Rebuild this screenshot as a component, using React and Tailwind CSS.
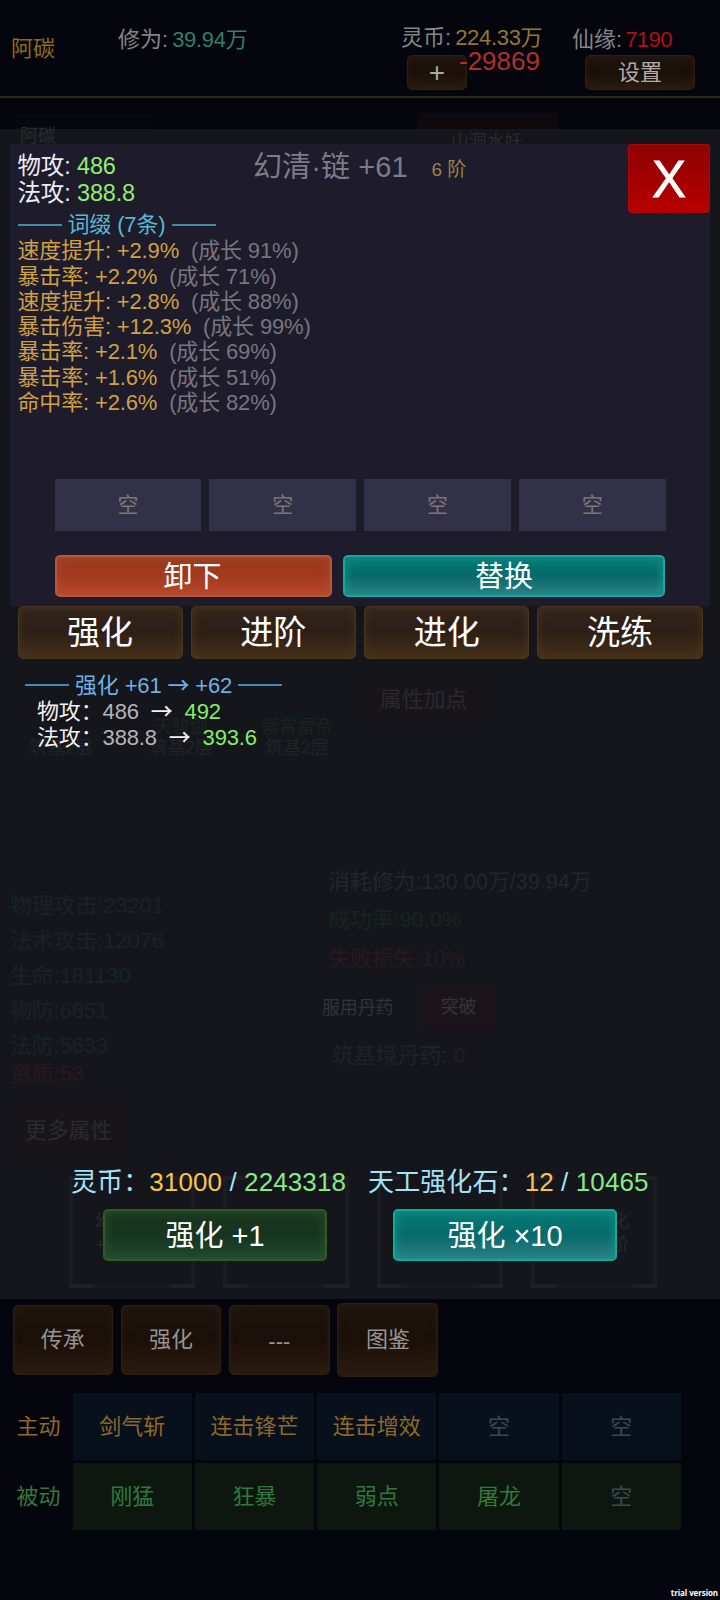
import clsx from "clsx";

const TONES = {
  brown:
    "bg-linear-to-b from-[#31241c] via-[#2d1f15] to-[#46301a] border border-[#493620] shadow-[inset_0_0_8px_1px_#4b341ccc]",
  brownDim:
    "bg-linear-to-b from-[#1f150f] via-[#1a0f09] to-[#2c1c0f] border border-[#2d1f12] shadow-[inset_0_0_6px_1px_#2d1d1099]",
  red: "bg-linear-to-b from-[#97391f] via-[#a13a1e] to-[#b5472c] border-2 border-[#b5573f] shadow-[inset_0_0_8px_1px_#bb4f35b0]",
  teal: "bg-linear-to-b from-[#067a74] via-[#056a6a] to-[#2b7d85] border-2 border-[#17a79d] shadow-[inset_0_0_9px_2px_#14958cb0]",
  green:
    "bg-linear-to-b from-[#1c3520] via-[#17351f] to-[#20492f] border-2 border-[#2f5a22] shadow-[inset_0_0_9px_2px_#28552ab0]",
};

function GameButton({ tone, className, children }) {
  return (
    <button
      className={clsx(
        "flex items-center justify-center rounded-[5px] whitespace-pre leading-none",
        TONES[tone],
        className
      )}
    >
      {children}
    </button>
  );
}

const Arrow = () => <span className="font-['Noto_Sans_CJK_SC'] leading-none font-medium">→</span>;

const affixes = [
  ["速度提升", "2.9", 91],
  ["暴击率", "2.2", 71],
  ["速度提升", "2.8", 88],
  ["暴击伤害", "12.3", 99],
  ["暴击率", "2.1", 69],
  ["暴击率", "1.6", 51],
  ["命中率", "2.6", 82],
];

const active = ["剑气斩", "连击锋芒", "连击增效", "空", "空"];
const passive = ["刚猛", "狂暴", "弱点", "屠龙", "空"];

function Header() {
  return (
    <header className="relative h-[98px] shrink-0 border-b-2 border-[#2e2719] text-[22px] leading-[24px] text-[#858585]">
      <div className="flex">
        <div className="ml-[11px] w-[107px] pt-[37px] text-[#8c6c20]">阿碳</div>
        <div className="flex w-[283px] gap-1 pt-[28px]">
          <span>修为:</span>
          <span className="tracking-[-0.3px] text-[#2f8068]">39.94万</span>
        </div>
        <div className="w-[171px] pt-[26px]">
          <div className="flex gap-1">
            <span>灵币:</span>
            <span className="tracking-[-0.3px] text-[#96782a]">224.33万</span>
          </div>
          <GameButton tone="brownDim" className="mt-[5px] ml-[6px] h-[35px] w-[60px] text-[28px] text-[#aaa]">
            +
          </GameButton>
        </div>
        <div className="pt-[28px]">
          <div className="flex gap-[3px]">
            <span>仙缘:</span>
            <span className="tracking-[-0.5px] text-[#b50f12]">7190</span>
          </div>
          <GameButton tone="brownDim" className="mt-[3px] ml-[13px] h-[35px] w-[110px] text-[#b0acaa]">
            设置
          </GameButton>
        </div>
      </div>
      {/* floating spend number */}
      <span className="absolute top-[48px] left-[459px] text-[26px] leading-[26px] text-[#b0302a]">-29869</span>
    </header>
  );
}

const GHOST_STATS = ["物理攻击:23201", "法术攻击:12076", "生命:181130", "物防:6851", "法防:5633"];

// The character screen showing faintly through the dialog
function Backdrop() {
  return (
    <div className="absolute inset-0 text-[22px] leading-[24px] tracking-[-0.15px] whitespace-pre text-[#1b2226]">
      <div className="absolute top-[-16px] left-[14px] h-[16px] w-[140px] bg-[#07070f]" />
      <div className="absolute top-[-16px] left-[417px] h-[16px] w-[141px] bg-[#0d090c]" />
      <div className="absolute top-[-5px] left-[20px] text-[18px] text-[#2a2b31]">阿碳</div>
      <div className="absolute top-[1px] left-[451px] text-[18px] text-[#292a30]">山洞水妖</div>

      <div className="absolute top-[547px] left-[358px] flex h-[48px] w-[131px] items-center justify-center rounded bg-[#17151a] text-[#292a2f]">
        属性加点
      </div>
      <div className="absolute top-[588px] left-[29px] flex text-center text-[18px] leading-[21px] text-[#1f2427]">
        <div className="w-[64px] pt-[21px]">筑基2层</div>
        <div className="ml-[52px] w-[72px]">
          <div className="text-[#1a2422]">天骏剑</div>
          <div>筑基2层</div>
        </div>
        <div className="ml-[44px] w-[72px]">
          <div className="text-[#1a2422]">紫霄雷帝</div>
          <div>筑基2层</div>
        </div>
      </div>

      <div className="absolute top-[759px] left-[10px] leading-[35px]">
        {GHOST_STATS.map((s) => (
          <div key={s}>{s}</div>
        ))}
        <div className="-mt-[4px] leading-[30px] text-[#2d1720]">资质:53</div>
      </div>
      <div className="absolute top-[970px] left-[12px] flex h-[64px] w-[113px] items-center justify-center rounded bg-[#17151a] text-[#2a2b30]">
        更多属性
      </div>

      <div className="absolute top-[740px] left-[328px] leading-[26px]">
        <div className="text-[#24262b]">消耗修为:130.00万/39.94万</div>
        <div className="mt-[12px] text-[#182420]">成功率:90.0%</div>
        <div className="mt-[13px] text-[#2a1820]">失败损失:10%</div>
        <div className="mt-[12px] -ml-[6px] flex h-[45px] items-center text-[18px] text-[#33343a]">
          <span className="w-[99px] pt-[2px]">服用丹药</span>
          <span className="flex h-[45px] w-[75px] items-center justify-center bg-[#1b141a]">突破</span>
        </div>
        <div className="mt-[14px] ml-[4px] text-[#1f2327]">
          筑基境丹药: <span className="text-[#32161f]">0</span>
        </div>
      </div>

      <div className="absolute top-[1047px] left-[69px] flex gap-[28px] text-[18px] text-[#27282d]">
        {["left", "mid", "mid2", "right"].map((slot) => (
          <div key={slot} className="relative h-[112px] w-[126px] border-x-4 border-[#1b1c21]">
            <i className="absolute top-0 -left-1 h-[4px] w-[24px] bg-[#1e1f24]" />
            <i className="absolute top-0 -right-1 h-[4px] w-[24px] bg-[#1e1f24]" />
            <i className="absolute bottom-0 -left-1 h-[4px] w-[126px] bg-[#191a1f]" />
            <i className="absolute bottom-0 -left-1 h-[4px] w-[24px] bg-[#202126]" />
            <i className="absolute -right-1 bottom-0 h-[4px] w-[24px] bg-[#202126]" />
            {slot === "left" && (
              <div className="absolute top-[33px] left-[22px]">
                幻{"\n"}+
              </div>
            )}
            {slot === "right" && (
              <div className="absolute top-[33px] left-[76px]">
                化{"\n"}阶
              </div>
            )}
          </div>
        ))}
      </div>
    </div>
  );
}

function ItemPanel() {
  return (
    <section className="mx-[10px] mt-[15px] h-[462px] bg-[#1e1c2b]">
      <div className="flex h-[69px]">
        <div className="w-[243px] pt-[9px] pl-[7.5px] text-[23.5px] leading-[27px] tracking-[-0.15px] text-[#ecebfa]">
          <div>
            物攻: <span className="text-[#90ee70]">486</span>
          </div>
          <div>
            法攻: <span className="text-[#90ee70]">388.8</span>
          </div>
        </div>
        <div className="w-[178.5px] pt-[7px] text-[29px] leading-[32px] tracking-[0.1px] text-[#7d7b85]">幻清·链 +61</div>
        <div className="flex-1 pt-[14px] text-[19px] leading-[24px] text-[#96804f]">6 阶</div>
        <button className="h-[69px] w-[82px] rounded-[3px] border border-[#a80808] bg-linear-to-b from-[#8e0000] to-[#b80000] text-[51px] leading-[69px] text-white [-webkit-text-stroke:0.8px_white]">
          X
        </button>
      </div>

      <div className="-mt-px h-[267px] pl-[7.5px] text-[22px] leading-[25.3px] tracking-[-0.15px] whitespace-pre">
        <div className="mb-px flex items-center text-[#57b8d4]">
          <i className="mr-[6px] h-[2px] w-[44px] bg-[#3f8ea5]" />
          词缀 (7条)
          <i className="ml-[7px] h-[2px] w-[44px] bg-[#3f8ea5]" />
        </div>
        {affixes.map(([name, value, growth], i) => (
          <div key={i} className="text-[#cfa046]">
            {name}: +{value}%<span className="text-[#77757e]">{`  (成长 ${growth}%)`}</span>
          </div>
        ))}
      </div>

      <div className="mx-[44.5px] grid grid-cols-4 gap-2">
        {[0, 1, 2, 3].map((i) => (
          <div key={i} className="flex h-[52px] items-center justify-center bg-[#333147] text-[21px] text-[#7b7577]">
            空
          </div>
        ))}
      </div>
      <div className="mx-[45px] mt-[24px] flex justify-between text-[29px] text-white">
        <GameButton tone="red" className="h-[42px] w-[277px] pt-[3px] pr-[2px]">
          卸下
        </GameButton>
        <GameButton tone="teal" className="h-[42px] w-[322px] pt-[3px]">
          替换
        </GameButton>
      </div>
    </section>
  );
}

function EnhancePreview() {
  return (
    <section className="mt-[13px] h-[477px] pl-[25px] text-[22px] leading-[25.3px] tracking-[-0.15px] whitespace-pre">
      <div className="flex h-[25.3px] items-center text-[#6fb0e6]">
        <i className="mr-[6px] h-[2px] w-[44px] bg-[#4a86b8]" />
        <span>
          强化 +61 <Arrow /> +62
        </span>
        <i className="ml-[6px] h-[2px] w-[44px] bg-[#4a86b8]" />
      </div>
      {[
        ["物攻", "486", "492"],
        ["法攻", "388.8", "393.6"],
      ].map(([label, from, to]) => (
        <div key={label} className="h-[25.3px] pt-px pl-[12px] text-[#f2f2f2]">
          {label}：<span className="text-[#b4b4b6]">{from}</span>
          {"  "}
          <Arrow />
          {"  "}
          <span className="text-[#84ee66]">{to}</span>
        </div>
      ))}
    </section>
  );
}

function Cost({ label, need, have }) {
  return (
    <div className="text-[#a4e2f6]">
      {label}：<span className="text-[#f6c44c]">{need}</span> / <span className="text-[#86e988]">{have}</span>
    </div>
  );
}

function SkillRow({ label, skills, labelClass, cellClass }) {
  return (
    <div className={clsx("flex h-[67px] items-center gap-[3px]", labelClass)}>
      <div className="w-[53px]">{label}</div>
      {skills.map((s, i) => (
        <div
          key={i}
          className={clsx(
            "flex h-full w-[119.3px] items-center justify-center",
            cellClass,
            s === "空" && "text-[#3c4752]"
          )}
        >
          {s}
        </div>
      ))}
    </div>
  );
}

export default function App() {
  return (
    <div className="relative flex h-[1600px] w-[720px] flex-col overflow-hidden bg-[#05050d] font-['Liberation_Sans','Noto_Sans_CJK_SC',sans-serif]">
      <Header />

      <main className="relative mt-[31px] h-[1170px] shrink-0 bg-[#15161b]">
        <Backdrop />
        <div className="relative flex flex-col">
          <ItemPanel />
          <div className="mx-[17.5px] grid grid-cols-4 gap-[8.3px] text-[33px] text-white">
            {["强化", "进阶", "进化", "洗练"].map((t) => (
              <GameButton key={t} tone="brown" className="h-[53px]">
                {t}
              </GameButton>
            ))}
          </div>
          <EnhancePreview />
          <div className="mt-[18px] flex gap-[22px] pl-[71px] text-[26px] leading-[30px] tracking-[0.1px] whitespace-pre">
            <Cost label="灵币" need="31000" have="2243318" />
            <Cost label="天工强化石" need="12" have="10465" />
          </div>
          <div className="mt-[12px] ml-[103px] flex gap-[66px] text-[29px] text-white">
            <GameButton tone="green" className="h-[52px] w-[224px] pt-[2px]">
              强化 +1
            </GameButton>
            <GameButton tone="teal" className="h-[52px] w-[224px] pt-[2px]">
              强化 ×10
            </GameButton>
          </div>
        </div>
      </main>

      <nav className="mt-[3px] ml-[12.5px] flex h-[75px] shrink-0 items-center gap-[7.8px] text-[22px] text-[#979391]">
        <GameButton tone="brownDim" className="h-[70px] w-[100.5px]">
          传承
        </GameButton>
        <GameButton tone="brownDim" className="h-[70px] w-[100.5px]">
          强化
        </GameButton>
        <GameButton tone="brownDim" className="h-[70px] w-[100.5px] pt-1">
          ---
        </GameButton>
        <GameButton tone="brownDim" className="h-[74px] w-[101px]">
          图鉴
        </GameButton>
      </nav>

      <footer className="mt-[16px] ml-[16.5px] flex flex-col gap-[3px] text-[22px]">
        <SkillRow label="主动" skills={active} labelClass="text-[#8f682a]" cellClass="bg-[#08111b]" />
        <SkillRow label="被动" skills={passive} labelClass="text-[#30793a]" cellClass="bg-[#0d170f]" />
      </footer>

      <span className="absolute right-[2px] bottom-[1px] font-['Open_Sans',sans-serif] text-[8px] leading-[12px] font-bold tracking-[-0.1px] text-white">
        trial version
      </span>
    </div>
  );
}
